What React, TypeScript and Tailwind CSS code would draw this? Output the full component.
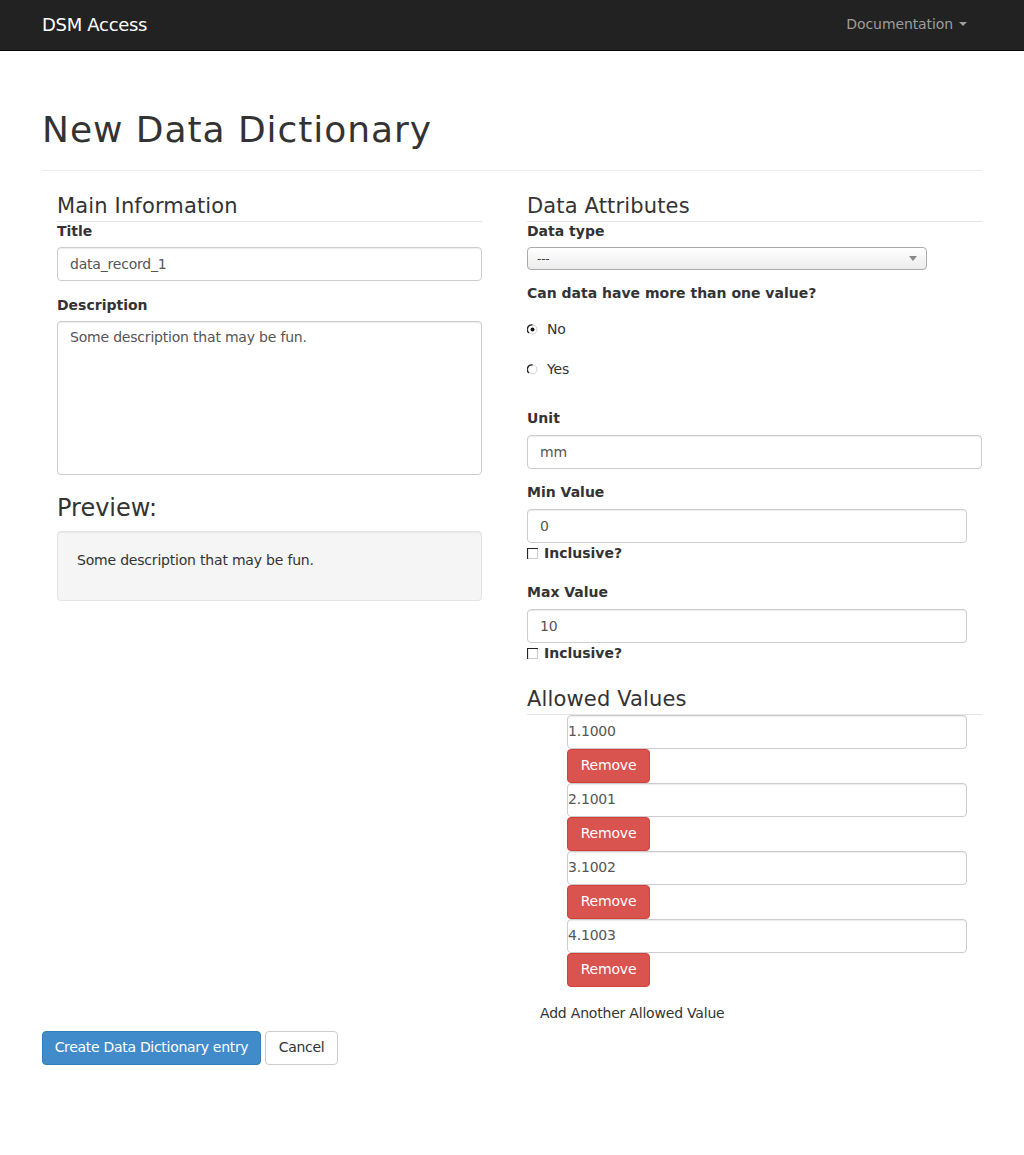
import React from "react";

const sans = "font-['DejaVu_Sans',Verdana,sans-serif]";

const Radio = ({ checked }: { checked?: boolean }) => (
  <svg width="11" height="11" viewBox="0 0 11 11" className="shrink-0">
    <circle cx="5.5" cy="5.5" r="4.5" fill="#fff" stroke="#d0d0d0" />
    <path d="M5.5 1 A4.5 4.5 0 0 0 2 9" fill="none" stroke="#222" strokeWidth="1.3" />
    {checked && <circle cx="5.5" cy="5.5" r="2" fill="#111" />}
  </svg>
);

const Check = () => (
  <svg width="11" height="11" viewBox="0 0 11 11" className="shrink-0">
    <rect x="0.5" y="0.5" width="10" height="10" fill="#fff" stroke="#ccc" />
    <path d="M0.5 11 V0.5 H11" fill="none" stroke="#222" strokeWidth="1.2" />
  </svg>
);

const inputCls =
  "h-[34px] rounded-[4px] border border-[#ccc] bg-white px-3 pb-px text-[14px] leading-[20px] text-[#555] shadow-[inset_0_1px_1px_rgba(0,0,0,0.075)] flex items-center";

const Label = ({ children }: { children: React.ReactNode }) => (
  <div className="h-5 pb-px text-[14px] font-bold leading-[19px] tracking-normal text-[#333]">{children}</div>
);

const Legend = ({ children }: { children: React.ReactNode }) => (
  <div className="h-[31px] border-b border-[#e5e5e5] text-[21px] leading-[30px] tracking-[0.15px] text-[#333]">
    {children}
  </div>
);

export default function App() {
  const allowed = ["1.1000", "2.1001", "3.1002", "4.1003"];
  return (
    <div className={`${sans} min-h-[1155px] bg-white text-[14px] tracking-[-0.2px] text-[#333]`}>
      <nav className="h-[51px] border-b border-[#080808] bg-[#222]">
        <div className="mx-auto flex h-[50px] w-[940px] items-center justify-between pb-[2px]">
          <span className="text-[18px] tracking-[-0.3px] text-white">DSM Access</span>
          <span className="flex items-center gap-[6px] pr-[15px] text-[14px] tracking-[-0.1px] text-[#9d9d9d]">
            Documentation
            <span className="h-0 w-0 border-x-[4px] border-t-[4px] border-x-transparent border-t-[#9d9d9d]" />
          </span>
        </div>
      </nav>

      <div className="mx-auto w-[940px]">
        <div className="mt-[57px] border-b border-[#eee] pb-[18px]">
          <h1 className="text-[36px] leading-[44px] tracking-[0.95px] text-[#333]">New Data Dictionary</h1>
        </div>

        <div className="mt-[20px] flex">
          {/* left column */}
          <div className="ml-[15px] w-[425px]">
            <Legend>Main Information</Legend>
            <Label>Title</Label>
            <div className={`${inputCls} mt-[5px]`}>data_record_1</div>
            <div className="mt-[15px]">
              <Label>Description</Label>
            </div>
            <div className="mt-[5px] h-[154px] rounded-[4px] border border-[#ccc] px-3 py-[5px] leading-5 text-[#555] shadow-[inset_0_1px_1px_rgba(0,0,0,0.075)]">
              Some description that may be fun.
            </div>
            <h3 className="mt-[20px] text-[24px] leading-[26px] tracking-normal text-[#333]">Preview:</h3>
            <div className="mt-[10px] h-[70px] rounded-[4px] border border-[#e3e3e3] bg-[#f5f5f5] px-[19px] pt-[18px] leading-5 shadow-[inset_0_1px_1px_rgba(0,0,0,0.05)]">
              Some description that may be fun.
            </div>
          </div>

          {/* right column */}
          <div className="ml-[45px] w-[455px]">
            <Legend>Data Attributes</Legend>
            <Label>Data type</Label>
            <div className="mt-[5px] flex h-[23px] w-[400px] items-center justify-between rounded-[4px] border border-[#aaa] bg-gradient-to-b from-white to-[#ececec] pl-[9px] pr-[9px] text-[12px] text-[#444]">
              <span>---</span>
              <span className="h-0 w-0 border-x-[4px] border-t-[5px] border-x-transparent border-t-[#888]" />
            </div>
            <div className="mt-[14px]">
              <Label>Can data have more than one value?</Label>
            </div>
            <div className="mt-[15px] flex h-5 items-center gap-[9px] text-[#333]">
              <Radio checked />
              <span>No</span>
            </div>
            <div className="mt-[20px] flex h-5 items-center gap-[9px] text-[#333]">
              <Radio />
              <span>Yes</span>
            </div>
            <div className="mt-[30px]">
              <Label>Unit</Label>
            </div>
            <div className={`${inputCls} mt-[6px]`}>mm</div>
            <div className="mt-[14px]">
              <Label>Min Value</Label>
            </div>
            <div className={`${inputCls} mt-[6px] w-[440px]`}>0</div>
            <div className="flex h-5 items-center gap-[6px] font-bold tracking-normal">
              <Check />
              <span>Inclusive?</span>
            </div>
            <div className="mt-[20px]">
              <Label>Max Value</Label>
            </div>
            <div className={`${inputCls} mt-[6px] w-[440px]`}>10</div>
            <div className="flex h-5 items-center gap-[6px] font-bold tracking-normal">
              <Check />
              <span>Inclusive?</span>
            </div>
            <div className="mt-[21px]">
              <Legend>Allowed Values</Legend>
            </div>
            <div className="ml-[40px] w-[400px]">
              {allowed.map((v) => (
                <div key={v}>
                  <div className="flex h-[34px] items-center rounded-[4px] border border-[#ccc] bg-white pb-px text-[#555] shadow-[inset_0_1px_1px_rgba(0,0,0,0.075)]">
                    {v}
                  </div>
                  <div className="flex h-[34px] w-[83px] items-center justify-center rounded-[4px] border border-[#d43f3a] bg-[#d9534f] pb-px text-white">
                    Remove
                  </div>
                </div>
              ))}
            </div>
            <div className="ml-[13px] mt-[16px] h-5 leading-5 text-[#333]">
              Add Another Allowed Value
            </div>
          </div>
        </div>

        <div className="mt-[8px] flex gap-[4px] tracking-[-0.3px]">
          <div className="flex h-[34px] w-[219px] items-center justify-center rounded-[4px] border border-[#357ebd] bg-[#428bca] pb-px text-white">
            Create Data Dictionary entry
          </div>
          <div className="flex h-[34px] w-[73px] items-center justify-center rounded-[4px] border border-[#ccc] bg-white pb-px text-[#333]">
            Cancel
          </div>
        </div>
      </div>
    </div>
  );
}
